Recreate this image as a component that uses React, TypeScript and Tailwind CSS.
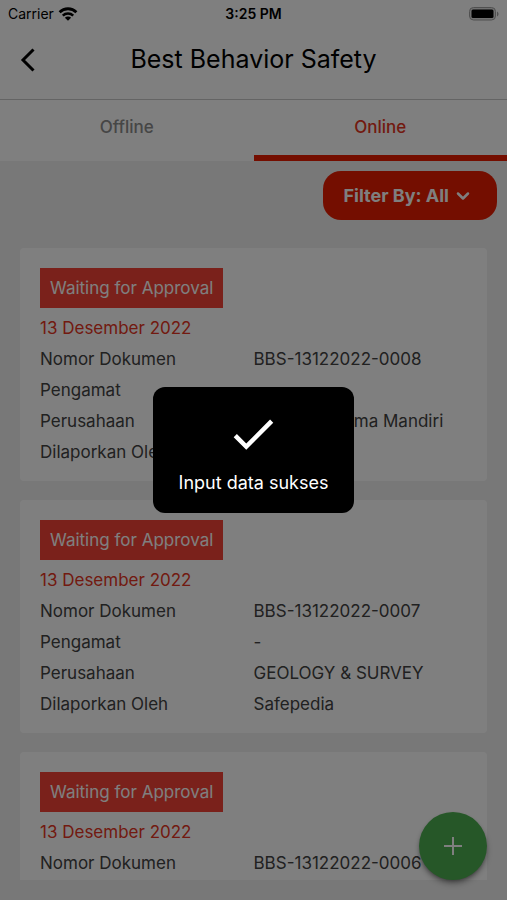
import { LuChevronDown } from "react-icons/lu";
import { MdCheck } from "react-icons/md";

const documents = [
	{
		number: "BBS-13122022-0008",
		date: "13 Desember 2022",
		observer: "-",
		company: "PT Cakra Prima Mandiri",
		reporter: "Safepedia",
	},
	{
		number: "BBS-13122022-0007",
		date: "13 Desember 2022",
		observer: "-",
		company: "GEOLOGY & SURVEY",
		reporter: "Safepedia",
	},
	{
		number: "BBS-13122022-0006",
		date: "13 Desember 2022",
		observer: "-",
		company: "GEOLOGY & SURVEY",
		reporter: "Safepedia",
	},
];

const StatusBar = () => {
	return (
		<div className="grid grid-cols-3 items-center h-7 px-2 text-sm text-black">
			<div className="flex items-center gap-1">
				<span>Carrier</span>
				<svg viewBox="0 0 20 14" className="w-5 h-4">
					<path d="M1.6 5.2a12 12 0 0 1 16.8 0" fill="none" stroke="currentColor" strokeWidth="2.8" />
					<path d="M4.8 8.6a7.4 7.4 0 0 1 10.4 0" fill="none" stroke="currentColor" strokeWidth="2.5" />
					<path d="M10 13.8 6.9 10.7a4.4 4.4 0 0 1 6.2 0z" fill="currentColor" />
				</svg>
			</div>
			<span className="text-center font-semibold">3:25 PM</span>
			<svg viewBox="0 0 30 14" className="w-[30px] h-[14px] justify-self-end">
				<rect x="0.5" y="0.5" width="26" height="12.5" rx="4" fill="#e0e0e0" stroke="#a0a0a0" />
				<rect x="2.5" y="2.5" width="22" height="8.5" rx="1.5" fill="#000" />
				<path d="M28 4.5c2 .8 2 4.2 0 5z" fill="#a0a0a0" />
			</svg>
		</div>
	);
};

const Row = ({ label, value }: { label: string; value: string }) => {
	return (
		<div className="grid grid-cols-2">
			<dt>{label}</dt>
			<dd className="whitespace-nowrap">{value}</dd>
		</div>
	);
};

const DocumentCard = ({ item }: { item: (typeof documents)[number] }) => {
	return (
		<article className="shrink-0 bg-white rounded-sm px-5 pt-5 pb-[13px] text-[17px] leading-[31px] text-[#424242]">
			<span className="flex w-fit items-center h-10 px-[10px] bg-[#f44336] text-white">
				Waiting for Approval
			</span>
			<p className="mt-[5px] text-[#e53422]">{item.date}</p>
			<dl>
				<Row label="Nomor Dokumen" value={item.number} />
				<Row label="Pengamat" value={item.observer} />
				<Row label="Perusahaan" value={item.company} />
				<Row label="Dilaporkan Oleh" value={item.reporter} />
			</dl>
		</article>
	);
};

const App = () => {
	return (
		<div className="relative flex flex-col h-screen overflow-hidden bg-[#f0f0f0] font-['Inter',sans-serif]">
			<header className="bg-white border-b border-[#c8c8c8]">
				<StatusBar />
				<div className="grid grid-cols-[56px_1fr_56px] items-center h-[71px] pb-2">
					<button aria-label="Kembali" className="flex justify-center">
						<svg viewBox="0 0 16 24" className="w-4 h-6" fill="none" stroke="#000" strokeWidth="3">
							<path d="M13.5 1.5 3 12l10.5 10.5" />
						</svg>
					</button>
					<h1 className="text-center text-[25px] text-black">Best Behavior Safety</h1>
				</div>
			</header>

			<nav className="grid grid-cols-2 bg-white text-[17px] font-medium">
				<button className="h-[61px] border-b-6 border-transparent text-[#8c8c8c]">Offline</button>
				<button className="h-[61px] border-b-6 border-[#e81c00] text-[#e53422]">Online</button>
			</nav>

			<div className="flex justify-end px-[10px] pt-[10px] pb-7">
				<button className="flex items-center gap-1 h-[49px] pl-5 pr-6 rounded-[18px] bg-[#e81c00] text-lg font-bold text-white">
					Filter By: All
					<LuChevronDown className="size-5" strokeWidth={3} />
				</button>
			</div>

			<main className="flex flex-col flex-1 min-h-0 gap-[19px] mx-5 mb-5 overflow-hidden">
				{documents.map((item) => (
					<DocumentCard key={item.number} item={item} />
				))}
			</main>

			<button
				aria-label="Tambah"
				className="absolute right-5 bottom-5 flex items-center justify-center size-[68px] rounded-full bg-[#4caf50] shadow-md shadow-black/40"
			>
				<svg viewBox="0 0 18 18" className="size-[18px]" stroke="#fff" strokeWidth="2">
					<path d="M9 0v18M0 9h18" />
				</svg>
			</button>

			<div className="absolute inset-0 flex items-center justify-center bg-black/50">
				<div role="status" className="flex flex-col items-center rounded-xl bg-black px-[26px] pt-5 pb-4 text-white">
					<MdCheck className="size-[54px]" />
					<p className="mt-2 text-lg">Input data sukses</p>
				</div>
			</div>
		</div>
	);
};

export default App;
